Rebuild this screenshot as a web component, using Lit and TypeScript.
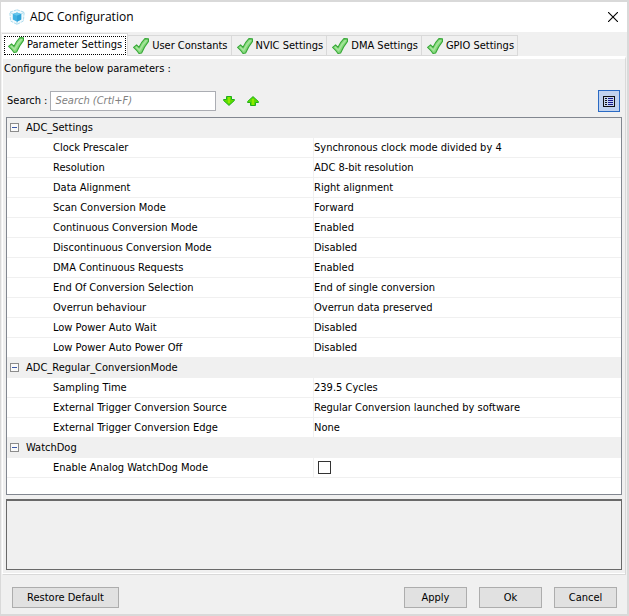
import { LitElement, html, css, svg, nothing } from "lit";
import { customElement, state } from "lit/decorators.js";
import { classMap } from "lit/directives/class-map.js";

interface Param {
  name: string;
  value: string | boolean;
}
interface Group {
  title: string;
  params: Param[];
}

const TABS = [
  "Parameter Settings",
  "User Constants",
  "NVIC Settings",
  "DMA Settings",
  "GPIO Settings",
];

const GROUPS: Group[] = [
  {
    title: "ADC_Settings",
    params: [
      { name: "Clock Prescaler", value: "Synchronous clock mode divided by 4" },
      { name: "Resolution", value: "ADC 8-bit resolution" },
      { name: "Data Alignment", value: "Right alignment" },
      { name: "Scan Conversion Mode", value: "Forward" },
      { name: "Continuous Conversion Mode", value: "Enabled" },
      { name: "Discontinuous Conversion Mode", value: "Disabled" },
      { name: "DMA Continuous Requests", value: "Enabled" },
      { name: "End Of Conversion Selection", value: "End of single conversion" },
      { name: "Overrun behaviour", value: "Overrun data preserved" },
      { name: "Low Power Auto Wait", value: "Disabled" },
      { name: "Low Power Auto Power Off", value: "Disabled" },
    ],
  },
  {
    title: "ADC_Regular_ConversionMode",
    params: [
      { name: "Sampling Time", value: "239.5 Cycles" },
      { name: "External Trigger Conversion Source", value: "Regular Conversion launched by software" },
      { name: "External Trigger Conversion Edge", value: "None" },
    ],
  },
  {
    title: "WatchDog",
    params: [{ name: "Enable Analog WatchDog Mode", value: false }],
  },
];

const checkIcon = html`<svg class="check" viewBox="0 0 16 16" width="16" height="16" aria-hidden="true">
  <path d="M0.6 9.4 L3.6 6.9 L6 9.3 C7.4 6.2 9.4 3 11.9 0.6 L15.5 0.9 V3.4 C12.6 7 10.4 10.8 8.6 15 L6 15.5 C4.4 13 2.6 11.2 0.6 9.4 Z"
    fill="#86d97c" stroke="#38a838" stroke-width="1.1" stroke-linejoin="round" />
  <path d="M3 9.1 L6.6 12.4 C8.6 8.4 10.6 5 13.6 2.2" fill="none" stroke="#a8e69e" stroke-width="1.4" />
</svg>`;

const cubeIcon = html`<svg viewBox="0 0 16 16" width="16" height="16" aria-hidden="true">
  <path d="M8 0.8 L15.2 3.2 L14.4 12 L8 15.4 L1.6 12 L0.8 3.2 Z" fill="#f1f9fc" stroke="#a5d8ec" stroke-width="0.9" stroke-dasharray="3 1" />
  <path d="M1 3.4 L4 5 M15 3.4 L12 5 M8 12.6 V15.4" stroke="#a5d8ec" stroke-width="0.9" />
  <path d="M8 3.4 L12.2 5 V10.4 L8 12.8 L3.8 10.4 V5 Z" fill="#3fb1e2" />
  <path d="M8 3.4 L12.2 5 L8 6.8 L3.8 5 Z" fill="#66c6ec" />
  <path d="M8 6.8 L12.2 5 V10.4 L8 12.8 Z" fill="#2fa2d8" />
</svg>`;

const arrowIcon = (up: boolean) => html`<svg viewBox="0 0 12 10" width="12" height="10" aria-hidden="true">
  ${up
    ? svg`<path d="M6 0.6 L11.4 5.5 V6.5 H8.5 V9.5 H3.5 V6.5 H0.6 V5.5 Z" fill="#5ddc00" stroke="#1fb01a" stroke-linejoin="round" /><path d="M6 3 V9" stroke="#8fe800" stroke-width="2" />`
    : svg`<path d="M6 9.4 L11.4 4.5 V3.5 H8.5 V0.5 H3.5 V3.5 H0.6 V4.5 Z" fill="#5ddc00" stroke="#1fb01a" stroke-linejoin="round" /><path d="M6 1 V7" stroke="#8fe800" stroke-width="2" />`}
</svg>`;

const listIcon = html`<svg viewBox="0 0 12 11" width="12" height="11" shape-rendering="crispEdges" aria-hidden="true">
  <rect x="0.5" y="0.5" width="11" height="10" fill="#c5d6f0" stroke="#111" />
  <path d="M2 2.5 H4 M2 4.5 H4 M2 6.5 H4 M2 8.5 H4" stroke="#111" />
  <path d="M5 2.5 H10 M5 4.5 H10 M5 6.5 H10 M5 8.5 H10" stroke="#16168c" />
</svg>`;

const closeIcon = html`<svg viewBox="0 0 10 10" width="10" height="10" aria-hidden="true">
  <path d="M0 0 L10 10 M10 0 L0 10" stroke="#000" stroke-width="1.1" />
</svg>`;

@customElement("app-root")
export class AppRoot extends LitElement {
  @state() private selected = 0;
  @state() private collapsed = new Set<string>();
  @state() private byGroup = true;

  static styles = css`
    :host {
      display: block;
      font: 11px/20px "DejaVu Sans Condensed", "DejaVu Sans", sans-serif;
      color: #000;
    }
    * {
      box-sizing: border-box;
    }
    button,
    input {
      font: inherit;
      color: inherit;
      margin: 0;
      border-radius: 0;
    }
    .window {
      min-height: 100vh;
      display: flex;
      flex-direction: column;
      background: #f0f0f0;
      border: 2px solid #d9d9d9;
      border-left-width: 1px;
    }
    .titlebar {
      display: flex;
      align-items: center;
      gap: 5px;
      height: 30px;
      padding: 0 9px 0 8px;
      background: #fff;
    }
    .titlebar h1 {
      flex: 1;
      margin: 0;
      font: 12px/20px "Open Sans", "Noto Sans", sans-serif;
    }
    .titlebar svg,
    .icon svg,
    .toggle svg {
      display: block;
    }
    .icon {
      padding: 0;
      border: 0;
      background: none;
    }
    .tabs {
      display: flex;
      align-items: flex-end;
      height: 23px;
      margin-top: 1px;
      padding-left: 1px;
    }
    .tab {
      display: flex;
      align-items: center;
      height: 21px;
      padding: 0 3px 0 5px;
      border: 1px solid #d9d9d9;
      border-left: 0;
      background: #f0f0f0;
      white-space: nowrap;
    }
    .tab.active {
      height: 23px;
      padding: 1px 1px 1px 2px;
      border-bottom: 0;
      background: #fff;
    }
    .tab.active .label {
      height: 19px;
      padding: 0 3px;
      border: 1px dotted #000;
    }
    .label {
      display: flex;
      align-items: center;
      gap: 3px;
    }
    .panel {
      flex: 1;
      display: flex;
      flex-direction: column;
      margin: 0 1px;
      padding: 0 3px 4px;
      border: 1px solid #d9d9d9;
      border-top: 3px solid #fff;
      border-left-color: #fff;
      box-shadow: inset 0 -1px #fff;
    }
    .intro {
      margin: 0 0 11px -2px;
    }
    .search {
      display: flex;
      align-items: center;
      gap: 3px;
      height: 22px;
      padding: 0 2px 0 1px;
      margin-bottom: 5px;
    }
    .search input {
      width: 166px;
      height: 20px;
      padding: 0 4px;
      border: 1px solid #abadb3;
      background: #fff;
    }
    .search input::placeholder {
      color: #808080;
      font-style: italic;
      opacity: 1;
    }
    .arrows {
      display: flex;
      gap: 12px;
      margin-left: 4px;
    }
    .view {
      display: grid;
      place-items: center;
      width: 22px;
      height: 22px;
      margin-left: auto;
      padding: 0;
      border: 1px solid #c0c0c0;
      background: #f0f0f0;
    }
    .view.on {
      border-color: #2a6ac4;
      background: #c1d3ef;
    }
    .grid {
      flex: 1;
      border: 1px solid #828790;
      background: #fff;
    }
    table {
      width: 100%;
      table-layout: fixed;
      border-collapse: separate;
      border-spacing: 0;
    }
    th,
    td {
      height: 20px;
      padding: 0;
      font-weight: normal;
      line-height: 19px;
      text-align: left;
      white-space: nowrap;
      overflow: hidden;
      border-bottom: 1px solid #f0f0f0;
    }
    .name {
      padding-left: 46px;
      border-right: 1px solid #f0f0f0;
    }
    .group {
      background: #f0f0f0;
    }
    .bar {
      display: flex;
      align-items: center;
      gap: 7px;
      padding-left: 3px;
    }
    .toggle {
      padding: 0;
      border: 0;
      background: none;
    }
    td input {
      appearance: none;
      display: block;
      width: 13px;
      height: 13px;
      margin-left: 4px;
      border: 1px solid #333;
      background: #fff;
    }
    td input:checked {
      box-shadow: inset 0 0 0 2px #fff;
      background: #333;
    }
    .details {
      height: 71px;
      margin-top: 4px;
      border: 1px solid #696969;
      border-top-width: 2px;
    }
    .actions {
      display: flex;
      gap: 12px;
      padding: 12px 10px 6px 11px;
    }
    .actions button {
      width: 63px;
      height: 21px;
      padding: 0;
      border: 1px solid #adadad;
      background: #e1e1e1;
      line-height: 19px;
    }
    .actions .restore {
      width: 107px;
      margin-right: auto;
    }
  `;

  private toggle(title: string) {
    const next = new Set(this.collapsed);
    if (!next.delete(title)) next.add(title);
    this.collapsed = next;
  }

  private renderGroup(group: Group) {
    const open = !this.collapsed.has(group.title);
    return html`<tbody>
      <tr>
        <th class="group" colspan="2" scope="rowgroup">
          <div class="bar">
            <button class="toggle" aria-expanded=${open} aria-label=${group.title} @click=${() => this.toggle(group.title)}>
              <svg viewBox="0 0 9 9" width="9" height="9" shape-rendering="crispEdges">
                <rect x="0.5" y="0.5" width="8" height="8" fill="#fafafa" stroke="#8c8c8c" />
                <path d="M2 4.5 H7" stroke="#3c5aa8" />
                ${open ? nothing : svg`<path d="M4.5 2 V7" stroke="#3c5aa8" />`}
              </svg>
            </button>
            ${group.title}
          </div>
        </th>
      </tr>
      ${open
        ? group.params.map(
            (p) => html`<tr>
              <th class="name" scope="row">
                ${typeof p.value === "boolean" ? html`<label for="watchdog">${p.name}</label>` : p.name}
              </th>
              <td>
                ${typeof p.value === "boolean"
                  ? html`<input id="watchdog" type="checkbox" .checked=${p.value} />`
                  : p.value}
              </td>
            </tr>`
          )
        : nothing}
    </tbody>`;
  }

  render() {
    return html`<main class="window">
      <header class="titlebar">
        ${cubeIcon}
        <h1>ADC Configuration</h1>
        <button class="icon" aria-label="Close">${closeIcon}</button>
      </header>
      <div class="tabs" role="tablist">
        ${TABS.map(
          (t, i) => html`<button
            class=${classMap({ tab: true, active: i === this.selected })}
            role="tab"
            aria-selected=${i === this.selected}
            @click=${() => (this.selected = i)}
          >
            <span class="label">${checkIcon}${t}</span>
          </button>`
        )}
      </div>
      <section class="panel">
        <p class="intro">Configure the below parameters :</p>
        <div class="search">
          <label for="search">Search :</label>
          <input id="search" type="text" placeholder="Search (Crtl+F)" />
          <div class="arrows">
            <button class="icon" aria-label="Next">${arrowIcon(false)}</button>
            <button class="icon" aria-label="Previous">${arrowIcon(true)}</button>
          </div>
          <button
            class=${classMap({ view: true, on: this.byGroup })}
            aria-label="Group parameters"
            aria-pressed=${this.byGroup}
            @click=${() => (this.byGroup = !this.byGroup)}
          >
            ${listIcon}
          </button>
        </div>
        <div class="grid">
          <table>
            <colgroup><col /><col /></colgroup>
            ${GROUPS.map((g) => this.renderGroup(g))}
          </table>
        </div>
        <div class="details"></div>
      </section>
      <footer class="actions">
        <button class="restore">Restore Default</button>
        <button>Apply</button>
        <button>Ok</button>
        <button>Cancel</button>
      </footer>
    </main>`;
  }
}
